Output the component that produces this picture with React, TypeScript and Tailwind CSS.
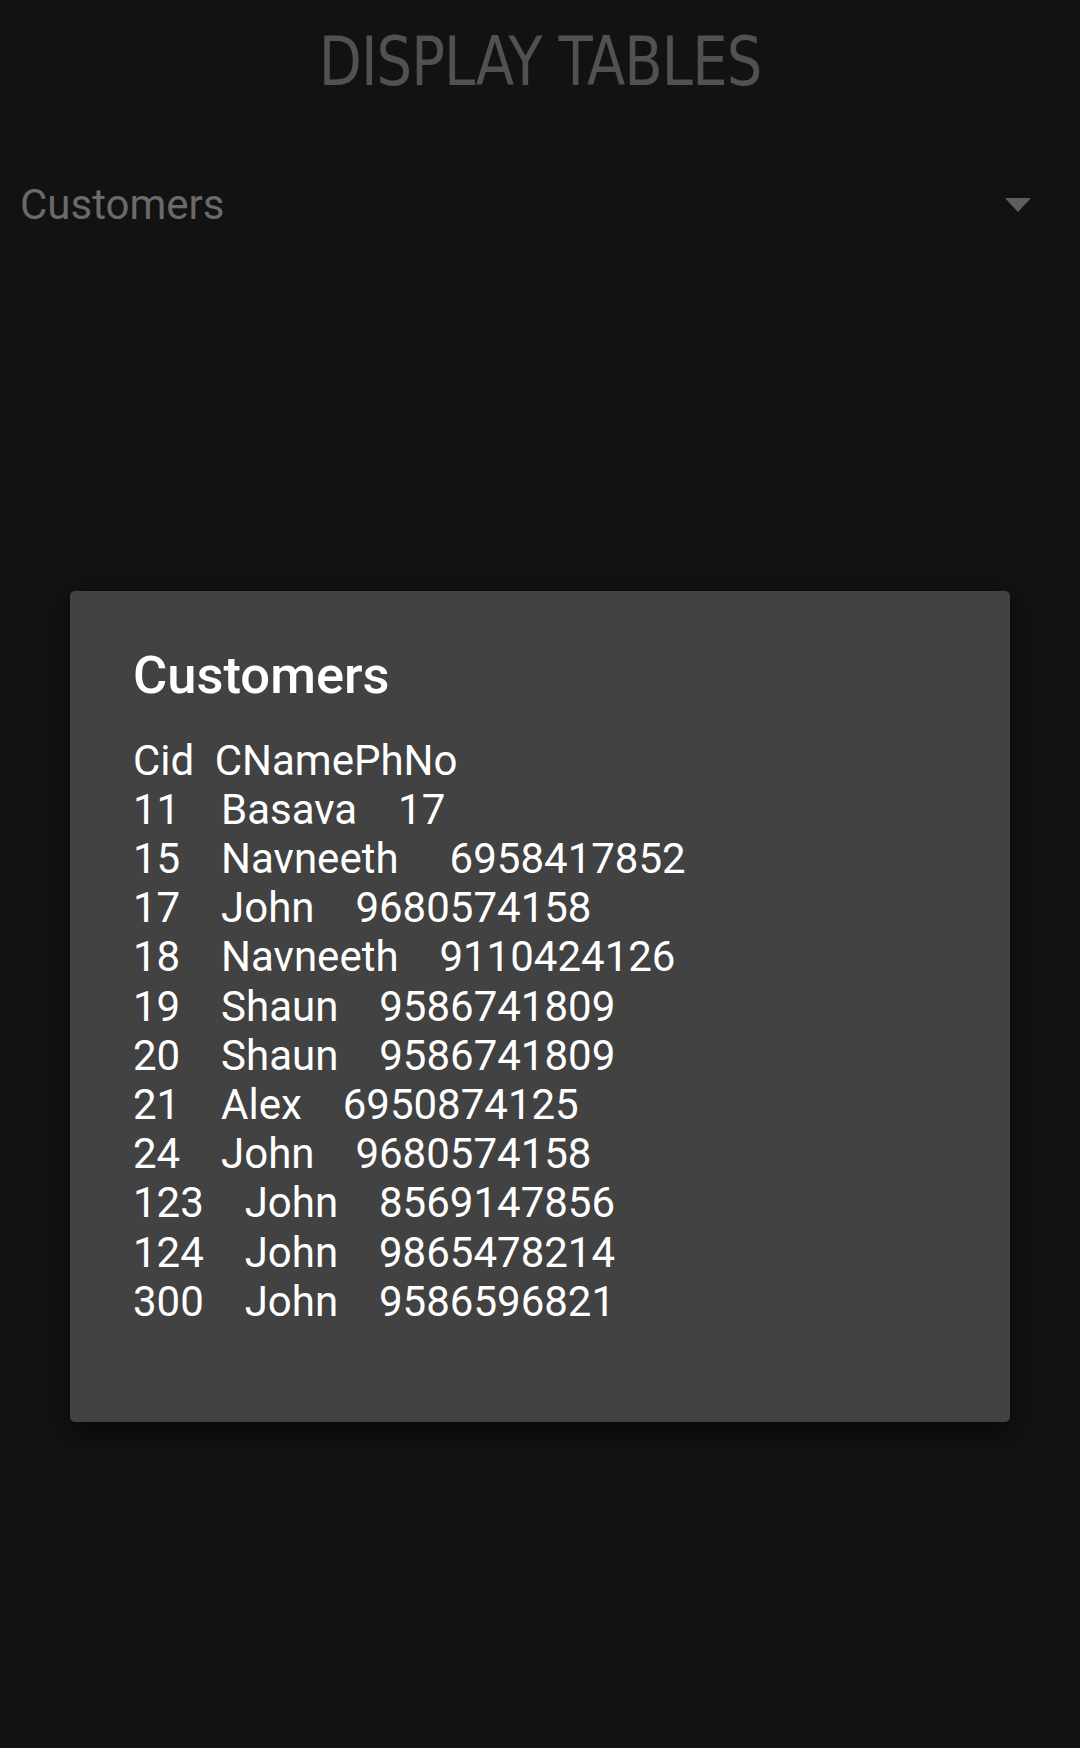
import React from "react";

const rows = [
  "Cid  CNamePhNo",
  "11    Basava    17",
  "15    Navneeth     6958417852",
  "17    John    9680574158",
  "18    Navneeth    9110424126",
  "19    Shaun    9586741809",
  "20    Shaun    9586741809",
  "21    Alex    6950874125",
  "24    John    9680574158",
  "123    John    8569147856",
  "124    John    9865478214",
  "300    John    9586596821",
];

export default function App() {
  return (
    <div className="relative min-h-[1748px] w-full bg-[#121212]">
      <h1
        className="pt-[29px] text-center text-[67px] leading-[67px] tracking-[-1px] text-[#515151] scale-x-[0.93]"
        style={{ fontFamily: '"Liberation Sans Narrow", "DejaVu Sans Condensed", "Liberation Sans", sans-serif' }}
      >
        DISPLAY TABLES
      </h1>

      <div
        className="mt-[84px] flex items-center justify-between pl-[20px] pr-[49px]"
        style={{ fontFamily: 'Roboto, "Noto Sans", sans-serif' }}
      >
        <span className="text-[42px] leading-[49.2px] text-[#6a6a6a]">Customers</span>
        <svg width="26" height="14" viewBox="0 0 26 14" className="block">
          <polygon points="0,0 26,0 13,14" fill="#5e5e5e" />
        </svg>
      </div>

      <div
        className="absolute left-[70px] top-[591px] h-[831px] w-[940px] rounded-[5px] bg-[#424242] pl-[63px] pt-[54px] shadow-[0_8px_30px_rgba(0,0,0,0.6)]"
        style={{ fontFamily: 'Roboto, "Noto Sans", sans-serif' }}
      >
        <h2 className="text-[52.5px] font-medium leading-[61.5px] text-white">Customers</h2>
        <div className="mt-[29px] whitespace-pre text-[42px] leading-[49.2px] text-white [word-spacing:-0.2px]">
          {rows.map((r, i) => (
            <div key={i}>{r}</div>
          ))}
        </div>
      </div>
    </div>
  );
}
